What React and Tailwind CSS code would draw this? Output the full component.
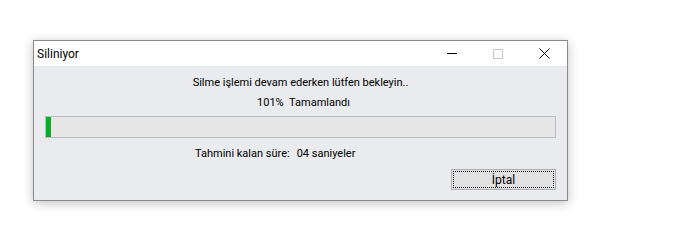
import React from "react";

export default function App() {
  const font = { fontFamily: 'Roboto, "Liberation Sans", sans-serif' };
  return (
    <div className="w-[677px] h-[250px] bg-white pl-[33px] pt-[40px]" style={font}>
      <div className="w-[535px] h-[161px] border border-[#8a8a8a] flex flex-col bg-[#e9ebee] shadow-[0_2px_10px_rgba(0,0,0,0.25)]">
        <div className="h-[25px] bg-white flex items-center shrink-0">
          <div className="pl-[3px] text-[12px] text-black flex-1">Siliniyor</div>
          <div className="w-[46px] h-full flex items-center justify-center">
            <div className="w-[10px] h-[1px] bg-black" />
          </div>
          <div className="w-[46px] h-full flex items-center justify-center">
            <div className="w-[10px] h-[10px] border border-[#c8c8c8]" />
          </div>
          <div className="w-[46px] h-full flex items-center justify-center">
            <svg width="11" height="11" viewBox="0 0 11 11">
              <path d="M0.5 0.5 L10.5 10.5 M10.5 0.5 L0.5 10.5" stroke="#000" strokeWidth="1" />
            </svg>
          </div>
        </div>
        <div className="flex flex-col pt-[9px] text-[11px] leading-[16px] text-black">
          <div className="text-center">Silme işlemi devam ederken lütfen bekleyin..</div>
          <div className="text-center mt-[4px] pl-[6px]">101%&nbsp;&nbsp;Tamamlandı</div>
          <div className="mx-[11px] mt-[5px] h-[22px] border border-[#bcbcbc] bg-[#e6e6e6] flex">
            <div className="w-[5px] h-full bg-[#06b025]" />
          </div>
          <div className="mt-[8px] pl-[161px] flex">
            <span>Tahmini kalan süre:</span>
            <span className="ml-[7px]">04 saniyeler</span>
          </div>
          <div className="mt-[7px] flex justify-end pr-[11px]">
            <div className="w-[105px] h-[21px] bg-[#e1e1e1] border border-[#adadad] p-[1px]">
              <div className="w-full h-full border border-dotted border-black flex items-center justify-center">
                <span className="leading-[14px] text-[12px]">İptal</span>
              </div>
            </div>
          </div>
        </div>
      </div>
    </div>
  );
}
